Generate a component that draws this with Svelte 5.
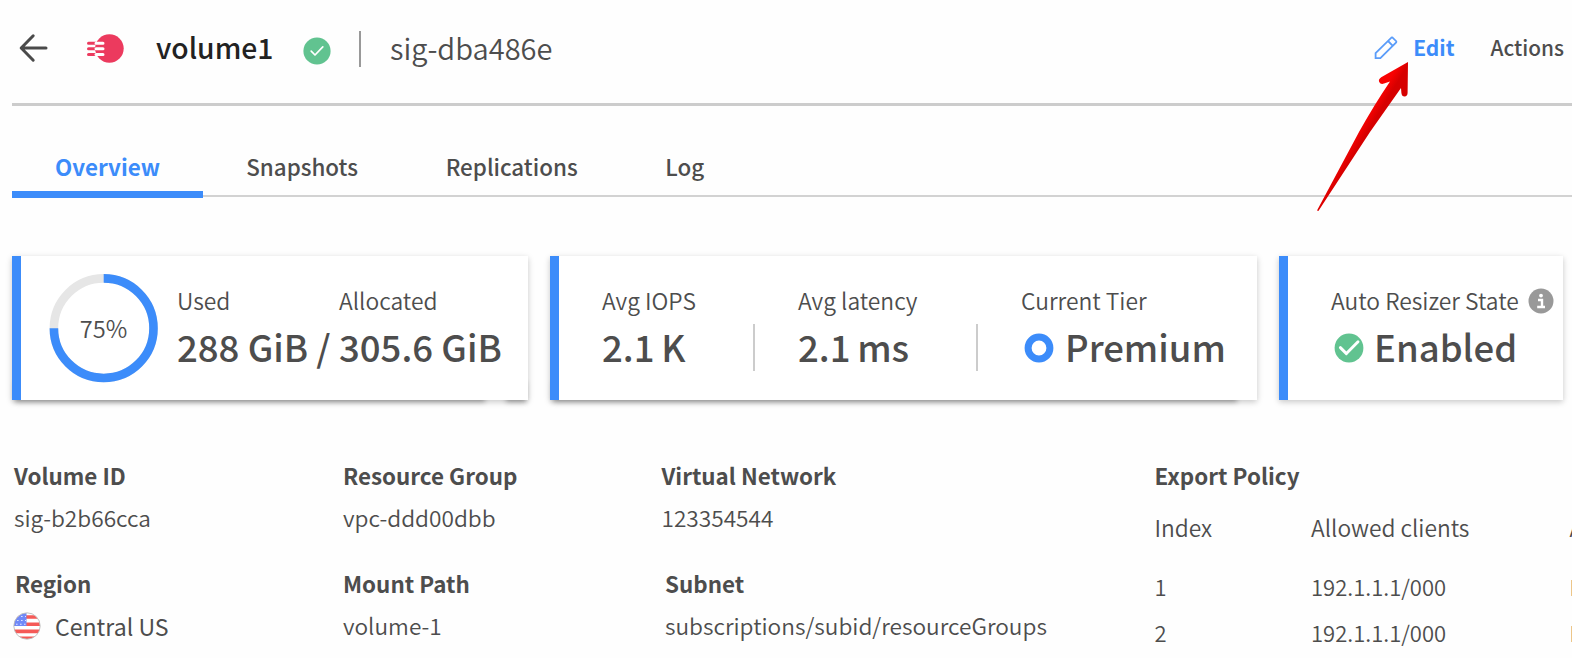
<script>
  const tabs = [
    { label: 'Overview', active: true },
    { label: 'Snapshots' },
    { label: 'Replications' },
    { label: 'Log' }
  ];
  const rules = [
    { index: 1, client: '192.1.1.1/000', access: 'R' },
    { index: 2, client: '192.1.1.1/000', access: 'R' }
  ];
</script>

<div class="page">
  <header>
    <svg class="back" width="30" height="30" viewBox="0 0 30 30"><path d="M15.2 2.8 L3.2 15 L15.2 27.2 M3.2 15 H28" /></svg>
    <svg class="logo" width="38" height="30" viewBox="0 0 38 30">
      <circle cx="22.4" cy="14.5" r="14.3" fill="#ec3a5e" />
      <path d="M1.5 9.3 H9 M1.5 14.8 H9 M1.5 20.4 H9" stroke="#ec3a5e" />
      <path d="M9 9.3 H16 M9 14.8 H16 M9 20.4 H16" stroke="#fff" />
    </svg>
    <h1>volume1</h1>
    <svg class="ok" width="28" height="28" viewBox="0 0 28 28"><circle cx="14" cy="14" r="13.6" /><path d="M8.2 14.2 L12 18 L19.8 9.8" stroke-width="1.7" /></svg>
    <i class="bar"></i>
    <span class="sig">sig-dba486e</span>
    <button class="edit">
      <svg width="24" height="24" viewBox="0 0 24 24"><path d="M1.6 22.2 V17.2 L17.4 1.6 Q18 1.2 18.6 1.6 L22.2 5.2 Q22.6 5.8 22.2 6.4 L6.4 22.2 Z M14 5 L18.8 9.8" /></svg>
      <b>Edit</b>
    </button>
    <button class="actions">Actions</button>
  </header>

  <nav>
    {#each tabs as tab}
      <span class="tab" class:active={tab.active}>{tab.label}</span>
    {/each}
  </nav>

  <section class="cards">
    <article class="card usage">
      <div class="ring">
        <svg width="110" height="110" viewBox="0 0 110 110">
          <circle cx="54.7" cy="55.2" r="49.8" stroke="#e6e6e6" />
          <path d="M54.7 5.4 A49.8 49.8 0 1 1 4.9 55.2" stroke="#3c8cfa" />
        </svg>
        <span>75%</span>
      </div>
      <div class="stat used"><label>Used</label><strong>288 GiB /</strong></div>
      <div class="stat allocated"><label>Allocated</label><strong>305.6 GiB</strong></div>
    </article>
    <article class="card perf">
      <div class="stat iops"><label>Avg IOPS</label><strong>2.1 K</strong></div>
      <i class="rule"></i>
      <div class="stat latency"><label>Avg latency</label><strong>2.1 ms</strong></div>
      <i class="rule"></i>
      <div class="stat tier"><label>Current Tier</label>
        <strong><svg width="30" height="30" viewBox="0 0 30 30"><circle cx="15" cy="15" r="10.9" fill="none" stroke="#3c8cfa" stroke-width="7" /></svg>Premium</strong>
      </div>
    </article>
    <article class="card resizer">
      <div class="stat state">
        <label>Auto Resizer State
          <svg class="info" width="26" height="26" viewBox="0 0 26 26"><circle cx="13" cy="13" r="12.5" fill="#999" /><circle cx="13" cy="7.6" r="1.9" fill="#fff" /><path d="M10 12 H14 V19 M9.2 19 H17" stroke="#fff" stroke-width="2.4" fill="none" /></svg>
        </label>
        <strong><svg class="ok" width="30" height="30" viewBox="0 0 30 30"><circle cx="15" cy="15" r="14.4" /><path d="M6.4 14.6 L12.4 20.6 L24 8.8" stroke-width="2.9" /></svg>Enabled</strong>
      </div>
    </article>
  </section>

  <section class="details">
    <div class="col c1">
      <dl><dt>Volume ID</dt><dd>sig-b2b66cca</dd></dl>
      <dl><dt class="region">Region</dt>
        <dd class="country">
          <svg width="28" height="28" viewBox="0 0 28 28">
            <defs><clipPath id="round"><circle cx="14" cy="14" r="13" /></clipPath></defs>
            <g clip-path="url(#round)">
              <rect width="28" height="28" fill="#fff" />
              <path d="M0 5 H28 M0 12.2 H28 M0 19.4 H28 M0 26.4 H28" stroke="#f55a57" stroke-width="3.6" />
              <rect width="13.5" height="14" fill="#7089f8" />
              <path d="M4 4.5 H13 M4 8.5 H13 M3 12.3 H13" stroke="#dbe2ff" stroke-width="1.1" stroke-dasharray="1.6 2.4" />
            </g>
            <circle cx="14" cy="14" r="13.2" fill="none" stroke="#bbb" stroke-width="0.9" />
          </svg>
          <span>Central US</span>
        </dd>
      </dl>
    </div>
    <div class="col c2">
      <dl><dt>Resource Group</dt><dd>vpc-ddd00dbb</dd></dl>
      <dl><dt>Mount Path</dt><dd>volume-1</dd></dl>
    </div>
    <div class="col c3">
      <dl><dt>Virtual Network</dt><dd>123354544</dd></dl>
      <dl class="subnet"><dt>Subnet</dt><dd>subscriptions/subid/resourceGroups</dd></dl>
    </div>
    <div class="col c4">
      <h2>Export Policy</h2>
      <div class="row head"><span>Index</span><span>Allowed clients</span><span>A</span></div>
      {#each rules as r}
        <div class="row"><span>{r.index}</span><span>{r.client}</span><span>{r.access}</span></div>
      {/each}
    </div>
  </section>

  <svg class="pointer" width="110" height="160" viewBox="0 0 110 160">
    <defs><linearGradient id="red" gradientUnits="userSpaceOnUse" x1="49" y1="67" x2="65" y2="76.7"><stop offset="0.3" stop-color="#f80202" /><stop offset="0.75" stop-color="#d60000" /></linearGradient></defs>
    <path d="M100 7 L73.2 22.2 Q70 24.5 71.2 27 Q72.6 29.8 76 28.6 L82 26.4 Q66 50 51 77 L9 155.4 L10.4 156 L62 77 L93 33 L93.4 38 Q93.8 41.6 96.6 41.6 Q99.4 41.4 99.6 38 Z" fill="url(#red)" />
  </svg>
</div>

<style>
  :global(body) { background: #fff; overflow: hidden; }
  .page {
    position: relative; width: 1572px; height: 658px; box-sizing: border-box; overflow: hidden;
    padding-left: 12px; background: #fefefe; color: #4d4d4d;
    font-family: "Noto Sans CJK SC", "Noto Sans", sans-serif; font-size: 22.4px; line-height: 36px; white-space: nowrap;
  }
  svg { display: block; flex: none; }
  button { border: 0; padding: 0; background: none; font: inherit; color: inherit; display: flex; align-items: center; }
  h1, h2, dl, dd, dt { margin: 0; font-size: inherit; font-weight: inherit; }
  header { display: flex; align-items: center; height: 93px; padding: 0 0 10px; border-bottom: 3px solid #ccc; }
  .back { margin: 3px 0 0 6px; fill: none; stroke: #4a4a4a; stroke-width: 3; stroke-linecap: round; stroke-linejoin: round; }
  .logo { margin: 4px 0 0 39px; stroke-width: 3; stroke-linecap: round; }
  h1 { margin-left: 31px; width: 118px; font-size: 28.3px; font-weight: 500; color: #222; }
  .ok circle { fill: #61c390; }
  .ok path { fill: none; stroke: #fff; stroke-linecap: round; stroke-linejoin: round; }
  header .ok { margin: 8px 0 0 29px; }
  .bar { width: 2px; height: 36px; margin: 4px 0 0 28px; background: #999; }
  .sig { margin-left: 29px; font-size: 29px; font-weight: 350; }
  .edit { margin-left: auto; color: #3c8cfa; gap: 15px; font-size: 21px; }
  .edit svg { margin-top: 2px; fill: none; stroke: #5a9cf9; stroke-width: 1.8; }
  .actions { margin: 0 8px 0 36px; font-size: 20.8px; font-weight: 500; }

  nav { display: flex; height: 89px; border-bottom: 2px solid #d2d2d2; }
  .tab { padding: 42px 44px 0 43.7px; font-weight: 500; height: 43px; }
  .tab.active { width: 104.5px; padding: 42px 43px 0; border-bottom: 7px solid #3c8cfa; color: #3c8cfa; font-weight: 700; }

  .cards { position: relative; z-index: 0; display: flex; margin-top: 58.5px; height: 144.1px; }
  .card { position: relative; display: flex; box-sizing: border-box; border-left: 9px solid #3c8cfa; background: #fff; box-shadow: 0 2px 6px rgba(0,0,0,.22); }
  .usage::before, .usage::after, .perf::after {
    content: ""; position: absolute; z-index: -1; bottom: 0; left: -6px; height: 20px;
    box-shadow: 0 2px 5px rgba(0,0,0,.32);
  }
  .usage::before { width: 470px; }
  .usage::after { left: 485px; width: 20px; }
  .perf::after { width: 684px; }
  .usage { width: 516px; }
  .perf { width: 707px; margin-left: 22px; }
  .resizer { width: 284px; margin-left: 22px; }
  .ring { position: relative; margin: 17px 0 0 28px; width: 110px; font-size: 23.6px; font-weight: 350; }
  .ring circle, .ring path { fill: none; stroke-width: 8.6; }
  .ring span { position: absolute; inset: 37px 1px auto 0; text-align: center; }
  .stat { display: flex; flex-direction: column; padding-top: 27.5px; }
  .stat label { display: flex; align-items: center; height: 36px; font-size: 22.8px; font-weight: 350; }
  .stat strong { display: flex; align-items: center; height: 56px; font-size: 36.5px; font-weight: 500; }
  .stat strong svg { margin-top: 1px; }
  .used { margin-left: 18px; width: 162px; }
  .iops { margin-left: 43px; width: 151px; }
  .iops strong, .latency strong { word-spacing: -1.5px; }
  .rule { width: 2px; height: 47px; margin-top: 68.5px; background: #ccc; }
  .latency { margin-left: 43px; width: 178px; }
  .tier { margin-left: 43px; }
  .tier strong svg { margin-right: 11px; margin-left: 3px; }
  .state { margin-left: 43px; }
  .state strong svg { margin-right: 10px; margin-left: 3px; }
  .info { margin-left: 9px; }

  .details { display: flex; padding: 57px 0 0 2px; }
  .col { flex: none; }
  .c1 { width: 329px; } .c2 { width: 318.5px; } .c3 { width: 493px; }
  dl { height: 108px; }
  dt, h2 { height: 43px; font-weight: 700; }
  dd { font-size: 22.65px; font-weight: 350; }
  .region { padding-left: 1px; }
  .country { display: flex; align-items: center; gap: 14px; margin-left: -1px; font-size: 23.1px; font-weight: 400; }
  .subnet { padding-left: 3.5px; }
  h2 { height: 53.5px; }
  .row { display: grid; grid-template-columns: 156.5px 258.5px 20px; height: 46.5px; font-size: 22px; font-weight: 350; }
  .row.head { height: 57.5px; font-size: 22.75px; }
  .pointer { position: absolute; left: 1308px; top: 55px; }
</style>
